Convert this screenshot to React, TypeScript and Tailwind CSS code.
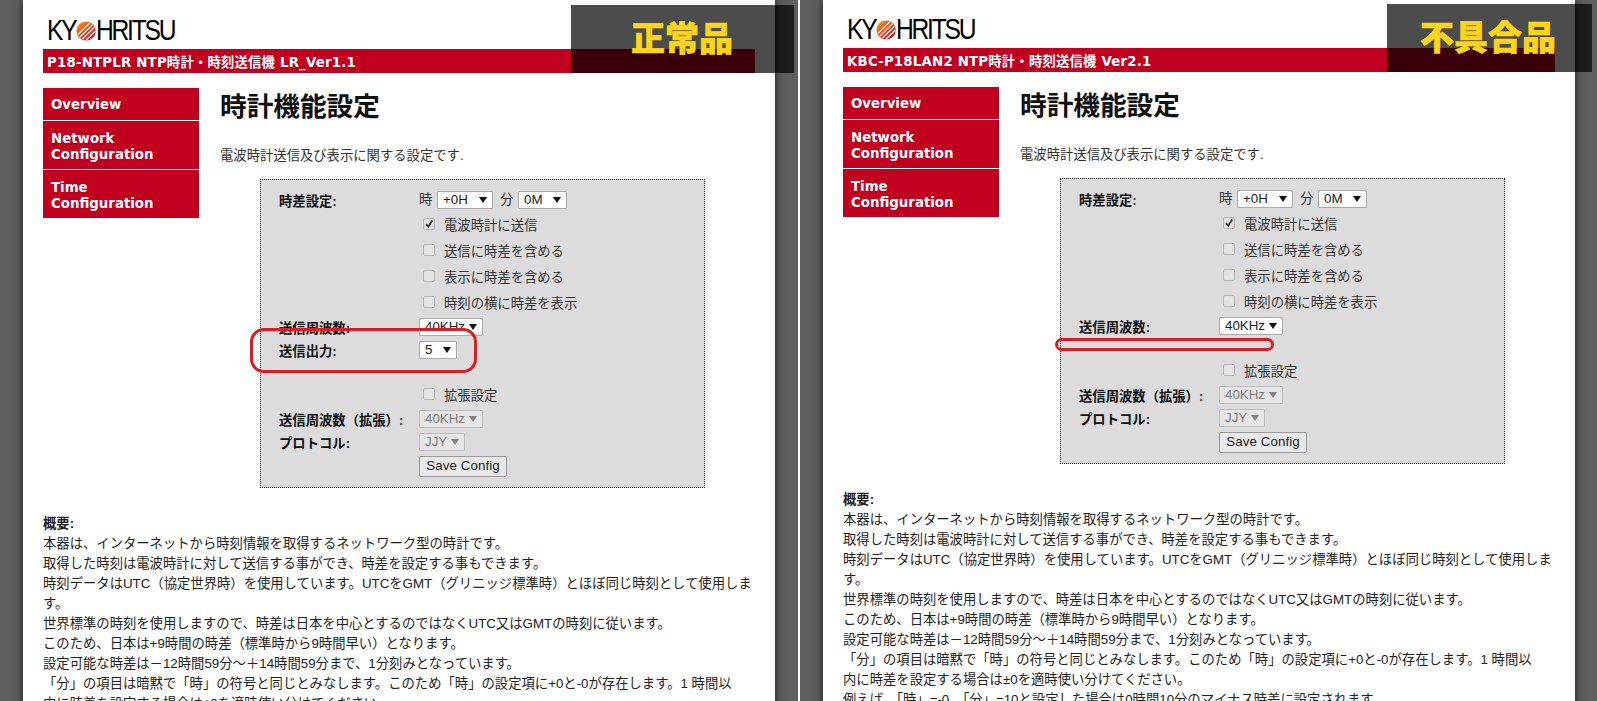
const body = '[font-family:"Liberation_Sans","Noto_Sans_CJK_JP",sans-serif]';

const Arrow = ({ off }: { off?: boolean }) => (
  <svg width="8" height="6" viewBox="0 0 8 6" className="shrink-0">
    <path d="M0 0h8L4 6z" fill={off ? '#808080' : '#111'} />
  </svg>
);

const Select = ({ value, w, off }: { value: string; w: string; off?: boolean }) => (
  <span
    className={`${w} h-[18px] inline-flex items-center justify-between pl-[5px] pr-[5px] rounded-[1px] border text-[13.33px] leading-none ${
      off ? 'bg-[#e6e6e6] border-[#bcbcbc] text-[#808080]' : 'bg-white border-[#aaaaaa] text-[#222]'
    }`}
  >
    {value}
    <Arrow off={off} />
  </span>
);

const Check = ({ label, checked }: { label: string; checked?: boolean }) => (
  <div className="h-[26px] flex items-center pl-[144px]">
    <span className="w-[12px] h-[12px] rounded-[2px] border border-[#b5b5b5] bg-[#e4e4e4] flex items-center justify-center">
      {checked && (
        <svg width="10" height="10" viewBox="0 0 10 10">
          <path d="M2 5.2l2.2 2.6L8.2 1.6" fill="none" stroke="#333" strokeWidth="1.8" />
        </svg>
      )}
    </span>
    <span className="ml-[9px] mt-[4px] text-[#333]">{label}</span>
  </div>
);

const Row = ({ label, children }: { label?: string; children: React.ReactNode }) => (
  <div className="h-[23px] flex items-start">
    <span className="w-[140px] shrink-0 mt-[1px] font-bold leading-[20px] text-[#111]">{label}</span>
    {children}
  </div>
);

const Logo = () => (
  <div className="h-[21px] ml-[24px] mb-[8px] flex items-center origin-left scale-x-[0.85] text-black font-['Liberation_Sans',sans-serif] text-[29px] leading-[21px] tracking-[-2.6px]">
    <span>KY</span>
    <svg width="24" height="20" viewBox="0 0 22 22" preserveAspectRatio="none" className="shrink-0">
      <defs>
        <linearGradient id="ball" x1="0" y1="0" x2="1" y2="1">
          <stop offset="0" stopColor="#f3a01d" />
          <stop offset="0.55" stopColor="#e2452d" />
          <stop offset="1" stopColor="#b8102a" />
        </linearGradient>
      </defs>
      <circle cx="11" cy="11" r="10.5" fill="url(#ball)" />
      <path d="M2 15L15 2M4 18L18 4M7 20L20 7M11 21L21 11" stroke="#fff" strokeWidth="1.3" />
    </svg>
    <span>HRITSU</span>
  </div>
);

const Nav = () => (
  <nav className="w-[156px] shrink-0 font-['DejaVu_Sans',sans-serif] font-bold text-white text-[13.33px] leading-[16px]">
    <div className="h-[33px] border-b border-white bg-[#c1001f] px-[8px] pt-[9px]">Overview</div>
    <div className="h-[49px] border-b border-white bg-[#c1001f] px-[8px] pt-[10px]">
      Network
      <br />
      Configuration
    </div>
    <div className="h-[48px] bg-[#c1001f] px-[8px] pt-[10px]">
      Time
      <br />
      Configuration
    </div>
  </nav>
);

const Panel = ({
  title,
  badge,
  pad,
  shade,
  oval,
  output,
  className,
}: {
  title: string;
  badge: string;
  pad: string;
  shade: string;
  oval: string;
  output?: boolean;
  className: string;
}) => (
  <div className={`relative h-full overflow-hidden bg-[#5e5e5e] ${className}`}>
    <div className={`ml-[23px] w-[752px] min-h-full bg-white shadow-[0_0_8px_rgba(0,0,0,0.75)] ${pad}`}>
      <Logo />
      <div className="mx-[20px] h-[24px] bg-[#c1001f] pl-[4px] pt-[5px] font-['DejaVu_Sans','Noto_Sans_CJK_JP',sans-serif] font-bold text-[13.33px] leading-[18px] text-white tracking-[0.2px]">
        {title}
      </div>

      <div className="mt-[15px] mx-[20px] flex">
        <Nav />
        <main className="ml-[21px] flex-1">
          <h1 className="text-[26.67px] leading-[38px] font-bold text-[#111]">時計機能設定</h1>
          <p className="mt-[20px] leading-[19.5px] text-[#333]">電波時計送信及び表示に関する設定です.</p>
          <div className="mt-[13px] ml-[40px] w-[445px] border border-dotted border-[#222] bg-[#dcdcdc] pt-[11px] pb-[10px] pl-[18px]">
            <div className="h-[20px] flex items-start">
              <span className="w-[140px] shrink-0 mt-[1px] font-bold leading-[20px] text-[#111]">時差設定:</span>
              <span className="w-[18px] leading-[18px] text-[#333]">時</span>
              <Select value="+0H" w="w-[56px]" />
              <span className="w-[25px] pl-[7px] leading-[18px] text-[#333]">分</span>
              <Select value="0M" w="w-[49px]" />
            </div>
            <Check label="電波時計に送信" checked />
            <Check label="送信に時差を含める" />
            <Check label="表示に時差を含める" />
            <Check label="時刻の横に時差を表示" />
            <div className="mt-[3px]">
              <Row label="送信周波数:">
                <Select value="40KHz" w="w-[64px]" />
              </Row>
              {output && (
                <Row label="送信出力:">
                  <Select value="5" w="w-[38px]" />
                </Row>
              )}
            </div>
            <div className="mt-[17px]">
              <Check label="拡張設定" />
            </div>
            <div className="mt-[3px]">
              <Row label="送信周波数（拡張）:">
                <Select value="40KHz" w="w-[64px]" off />
              </Row>
              <Row label="プロトコル:">
                <Select value="JJY" w="w-[46px]" off />
              </Row>
              <div className="pl-[140px]">
                <button className="w-[88px] h-[21px] rounded-[2px] border border-[#999] bg-[#e8e8e8] text-[13.33px] leading-none tracking-[0.1px] text-[#222]">
                  Save Config
                </button>
              </div>
            </div>
          </div>
        </main>
      </div>

      <div className="mt-[26px] mx-[20px] leading-[20px] text-[#222]">
        <p className="font-bold">概要:</p>
        <p>本器は、インターネットから時刻情報を取得するネットワーク型の時計です。</p>
        <p>取得した時刻は電波時計に対して送信する事ができ、時差を設定する事もできます。</p>
        <p>時刻データはUTC（協定世界時）を使用しています。UTCをGMT（グリニッジ標準時）とほぼ同じ時刻として使用します。</p>
        <p>世界標準の時刻を使用しますので、時差は日本を中心とするのではなくUTC又はGMTの時刻に従います。</p>
        <p>このため、日本は+9時間の時差（標準時から9時間早い）となります。</p>
        <p>設定可能な時差は－12時間59分～＋14時間59分まで、1分刻みとなっています。</p>
        <p>
          「分」の項目は暗黙で「時」の符号と同じとみなします。このため「時」の設定項に+0と-0が存在します。1 時間以
          <br />
          内に時差を設定する場合は±0を適時使い分けてください。
        </p>
        <p>例えば、「時」=-0、「分」=10と設定した場合は0時間10分のマイナス時差に設定されます。</p>
      </div>
    </div>

    <div className={`absolute flex items-center justify-end bg-black/70 text-[34px] font-black text-[#ffd519] [-webkit-text-stroke:0.6px_#ffd519] ${shade}`}>
      {badge}
    </div>
    <div className={`absolute border-[3px] border-[#dc1c24] ${oval}`} />
  </div>
);

export default function App() {
  return (
    <div className={`h-[701px] flex overflow-hidden bg-white text-[13.33px] ${body}`}>
      <Panel
        className="w-[798px]"
        title="P18-NTPLR NTP時計・時刻送信機 LR_Ver1.1"
        badge="正常品"
        pad="pt-[20px]"
        shade="left-[571px] top-[5px] w-[223px] h-[68px] pr-[61px]"
        oval="left-[250px] top-[328px] w-[227px] h-[45px] rounded-[14px]"
        output
      />
      <div className="w-[2px] bg-white" />
      <Panel
        className="flex-1"
        title="KBC-P18LAN2 NTP時計・時刻送信機 Ver2.1"
        badge="不具合品"
        pad="pt-[19px]"
        shade="left-[587px] top-[4px] w-[205px] h-[68px] pr-[36px]"
        oval="left-[255px] top-[338px] w-[219px] h-[13px] rounded-full"
      />
    </div>
  );
}
